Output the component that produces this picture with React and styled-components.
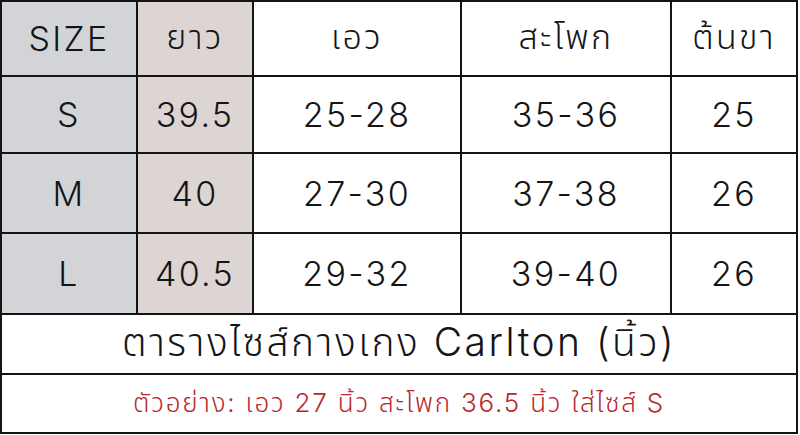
import React from "react";
import styled, { createGlobalStyle } from "styled-components";

const Global = createGlobalStyle`
  html, body {
    margin: 0;
    padding: 0;
    background: #fff;
  }
  body {
    font-family: Inter, "Noto Sans", "Noto Sans Thai", sans-serif;
  }
`;

const Table = styled("div")`
  display: grid;
  grid-template-columns: 134px 114px 206px 208px 124px;
  grid-template-rows: 73px 75px 78px 79px 58px 57px;
  gap: 2px;
  padding: 2px;
  width: 798px;
  box-sizing: border-box;
  background: #141414;
`;

const Cell = styled("div")`
  display: flex;
  align-items: center;
  justify-content: center;
  background: ${props =>
    props.tone === "gray" ? "#d3d4d7" : props.tone === "beige" ? "#ddd5d4" : "#fff"};
  color: #151515;
  font-size: 34px;
  font-weight: 300;
  letter-spacing: 2.3px;
`;

const Title = styled(Cell)`
  grid-column: 1 / -1;
  font-size: 39px;
  letter-spacing: 2.5px;
`;

const Note = styled(Cell)`
  grid-column: 1 / -1;
  font-size: 26px;
  letter-spacing: 1.8px;
  color: #b8262d;
`;

const headers = ["SIZE", "ยาว", "เอว", "สะโพก", "ต้นขา"];

const rows = [
  ["S", "39.5", "25-28", "35-36", "25"],
  ["M", "40", "27-30", "37-38", "26"],
  ["L", "40.5", "29-32", "39-40", "26"]
];

const toneFor = i => (i === 0 ? "gray" : i === 1 ? "beige" : null);

export default function App() {
  return (
    <>
      <Global />
      <Table>
        {headers.map((h, i) => (
          <Cell key={h} tone={toneFor(i)}>
            {h}
          </Cell>
        ))}
        {rows.map(row =>
          row.map((v, i) => (
            <Cell key={row[0] + i} tone={toneFor(i)}>
              {v}
            </Cell>
          ))
        )}
        <Title>ตารางไซส์กางเกง Carlton (นิ้ว)</Title>
        <Note>ตัวอย่าง: เอว 27 นิ้ว สะโพก 36.5 นิ้ว ใส่ไซส์ S</Note>
      </Table>
    </>
  );
}
